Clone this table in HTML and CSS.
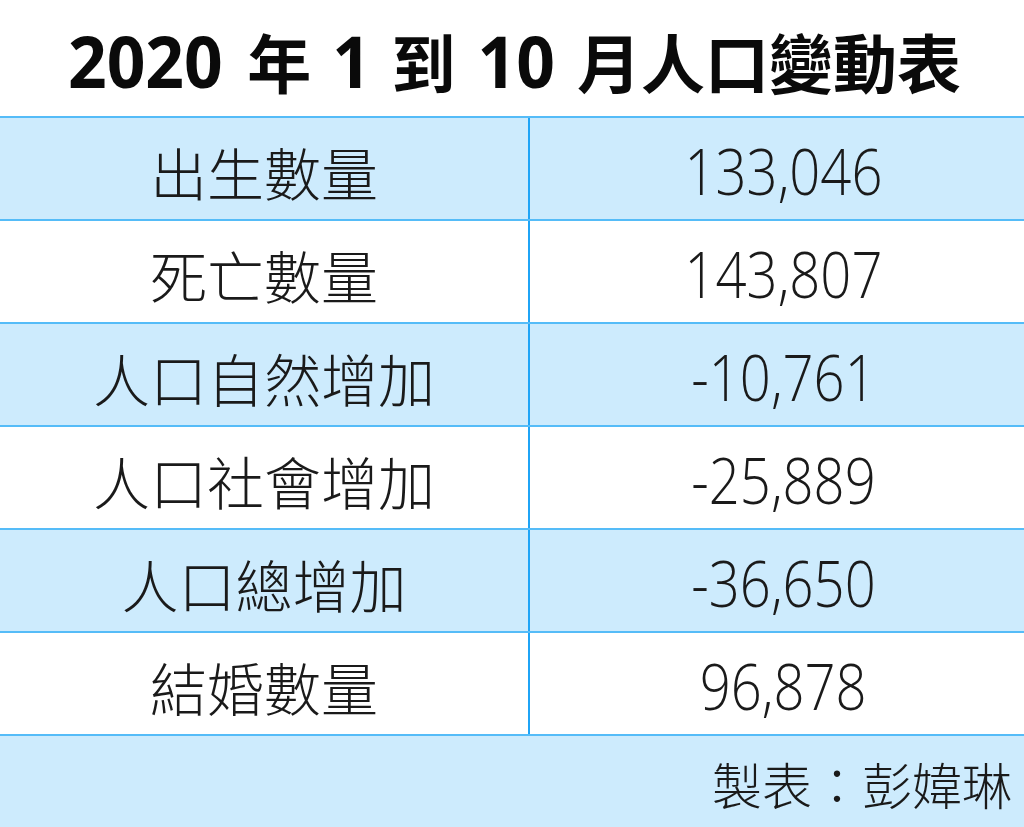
FILE: index.html
```html
<!DOCTYPE html>
<html lang="zh-Hant">
<head>
<meta charset="utf-8">
<title>2020 年 1 到 10 月人口變動表</title>
<link rel="stylesheet" href="styles.css">
</head>
<body>
<div class="sheet">
  <h1 class="title"><span class="num">2020</span> 年 <span class="num">1</span> 到 <span class="num">10</span> 月人口變動表</h1>
  <div class="table">
    <div class="row shade"><div class="label">出生數量</div><div class="value"><span>133,046</span></div></div>
    <div class="row"><div class="label">死亡數量</div><div class="value"><span>143,807</span></div></div>
    <div class="row shade"><div class="label">人口自然增加</div><div class="value"><span>-10,761</span></div></div>
    <div class="row"><div class="label">人口社會增加</div><div class="value"><span>-25,889</span></div></div>
    <div class="row shade"><div class="label">人口總增加</div><div class="value"><span>-36,650</span></div></div>
    <div class="row"><div class="label">結婚數量</div><div class="value"><span>96,878</span></div></div>
    <div class="footer">製表：彭媁琳</div>
  </div>
</div>
</body>
</html>
```

FILE: styles.css
```css
* { box-sizing: border-box; }
html, body { margin: 0; padding: 0; background: #ffffff; }
body {
  width: 1024px;
  height: 827px;
  overflow: hidden;
  font-family: "Noto Sans CJK TC", "Noto Sans", sans-serif;
  color: #111111;
}
.sheet { display: flex; flex-direction: column; height: 827px; }
.title {
  margin: 0;
  height: 116px;
  display: flex;
  align-items: center;
  justify-content: center;
  padding-top: 4px;
  font-size: 64px;
  font-weight: 700;
  line-height: 1;
  white-space: pre;
  word-spacing: 5px;
  color: #0a0a0a;
}
.title .num {
  font-family: "Open Sans", "Noto Sans", sans-serif;
  font-weight: 700;
  font-size: 72px;
  display: inline-block;
  transform: scaleX(0.94);
  margin: 0;
}
.table { display: flex; flex-direction: column; flex: 1; }
.row {
  height: 103px;
  display: grid;
  grid-template-columns: 530px 1fr;
  border-top: 2px solid #55bcf8;
  background: #ffffff;
}
.row.shade { background: #cdebfd; }
.label {
  display: flex;
  align-items: center;
  justify-content: center;
  border-right: 2px solid #1fa4f6;
  padding-top: 6px;
  font-size: 57px;
  font-weight: 300;
  line-height: 1;
  color: #1a1a1a;
}
.value {
  display: flex;
  align-items: center;
  justify-content: center;
  padding-left: 12px;
  padding-top: 4px;
  font-family: "Open Sans", "Noto Sans", sans-serif;
  font-size: 64px;
  font-weight: 300;
  line-height: 1;
  color: #1a1a1a;
}
.value span { display: inline-block; transform: scaleX(0.85); }
.footer {
  flex: 1;
  background: #cdebfd;
  border-top: 2px solid #55bcf8;
  display: flex;
  align-items: center;
  justify-content: flex-end;
  padding-right: 12px;
  padding-top: 2px;
  font-size: 50px;
  font-weight: 300;
  line-height: 1;
  color: #1a1a1a;
}
```
